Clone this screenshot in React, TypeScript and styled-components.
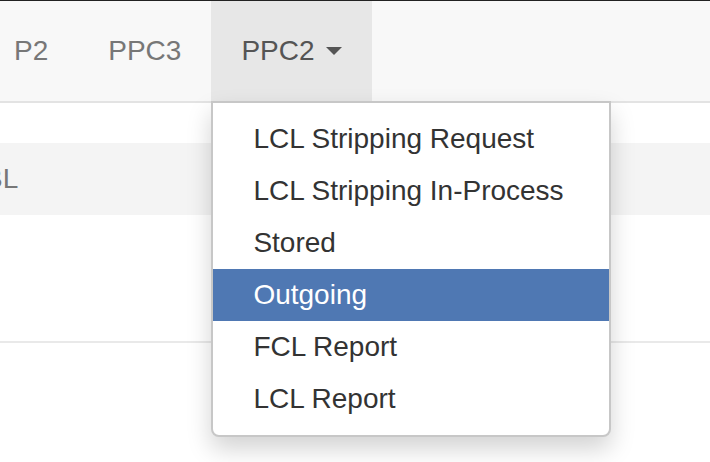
import React from "react";
import styled, { createGlobalStyle } from "styled-components";

const GlobalStyle = createGlobalStyle`
  html, body {
    margin: 0;
    padding: 0;
    background: #ffffff;
    overflow: hidden;
  }
  body {
    font-family: "Liberation Sans", Arial, Helvetica, sans-serif;
  }
  * { box-sizing: border-box; }
`;

const Page = styled.div`
  width: 710px;
  height: 462px;
  overflow: hidden;
  background: #fff;
`;

const Navbar = styled.nav`
  border-top: 1px solid #222;
  background: #f8f8f8;
  border-bottom: 2px solid #e3e3e3;
  height: 103px;
`;

const NavList = styled.ul`
  display: flex;
  list-style: none;
  margin: 0 0 0 -16px;
  padding: 0;
`;

const NavItem = styled.li`
  position: relative;
`;

const NavLink = styled.a<{ $active?: boolean }>`
  display: flex;
  align-items: center;
  height: 100px;
  padding: 0 30px;
  font-size: 28px;
  line-height: 40px;
  color: ${(p) => (p.$active ? "#555" : "#777")};
  background: ${(p) => (p.$active ? "#e7e7e7" : "transparent")};
  text-decoration: none;
  white-space: pre;
`;

const Caret = styled.span`
  display: inline-block;
  width: 0;
  height: 0;
  margin-left: 4px;
  border-top: 8px solid #555;
  border-left: 8px solid transparent;
  border-right: 8px solid transparent;
`;

const Menu = styled.ul`
  position: absolute;
  top: 100%;
  left: 0;
  z-index: 10;
  width: 400px;
  margin: 0;
  padding: 10px 0;
  list-style: none;
  background: #fff;
  border: 2px solid rgba(0, 0, 0, 0.22);
  border-radius: 0 0 8px 8px;
  box-shadow: 0 12px 24px rgba(0, 0, 0, 0.175);
`;

const MenuItem = styled.li<{ $active?: boolean }>`
  padding: 6px 40px;
  font-size: 28px;
  line-height: 40px;
  white-space: nowrap;
  color: ${(p) => (p.$active ? "#fff" : "#333")};
  background: ${(p) => (p.$active ? "#4f78b3" : "transparent")};
`;

const Content = styled.div`
  padding-top: 40px;
`;

const HeaderRow = styled.div`
  display: flex;
  align-items: center;
  height: 72px;
  background: #f4f4f4;
`;

const HeaderCell = styled.span`
  margin-left: -16px;
  font-size: 28px;
  color: #777;
`;

const BodyRow = styled.div`
  height: 128px;
  border-bottom: 2px solid #e9e9e9;
`;

const items = [
  "LCL Stripping Request",
  "LCL Stripping In-Process",
  "Stored",
  "Outgoing",
  "FCL Report",
  "LCL Report",
];

export default function App() {
  return (
    <Page>
      <GlobalStyle />
      <Navbar>
        <NavList>
          <NavItem>
            <NavLink>P2</NavLink>
          </NavItem>
          <NavItem>
            <NavLink>PPC3</NavLink>
          </NavItem>
          <NavItem>
            <NavLink $active>
              {"PPC2 "}
              <Caret />
            </NavLink>
            <Menu>
              {items.map((it) => (
                <MenuItem key={it} $active={it === "Outgoing"}>
                  {it}
                </MenuItem>
              ))}
            </Menu>
          </NavItem>
        </NavList>
      </Navbar>
      <Content>
        <HeaderRow>
          <HeaderCell>BL</HeaderCell>
        </HeaderRow>
        <BodyRow />
      </Content>
    </Page>
  );
}
